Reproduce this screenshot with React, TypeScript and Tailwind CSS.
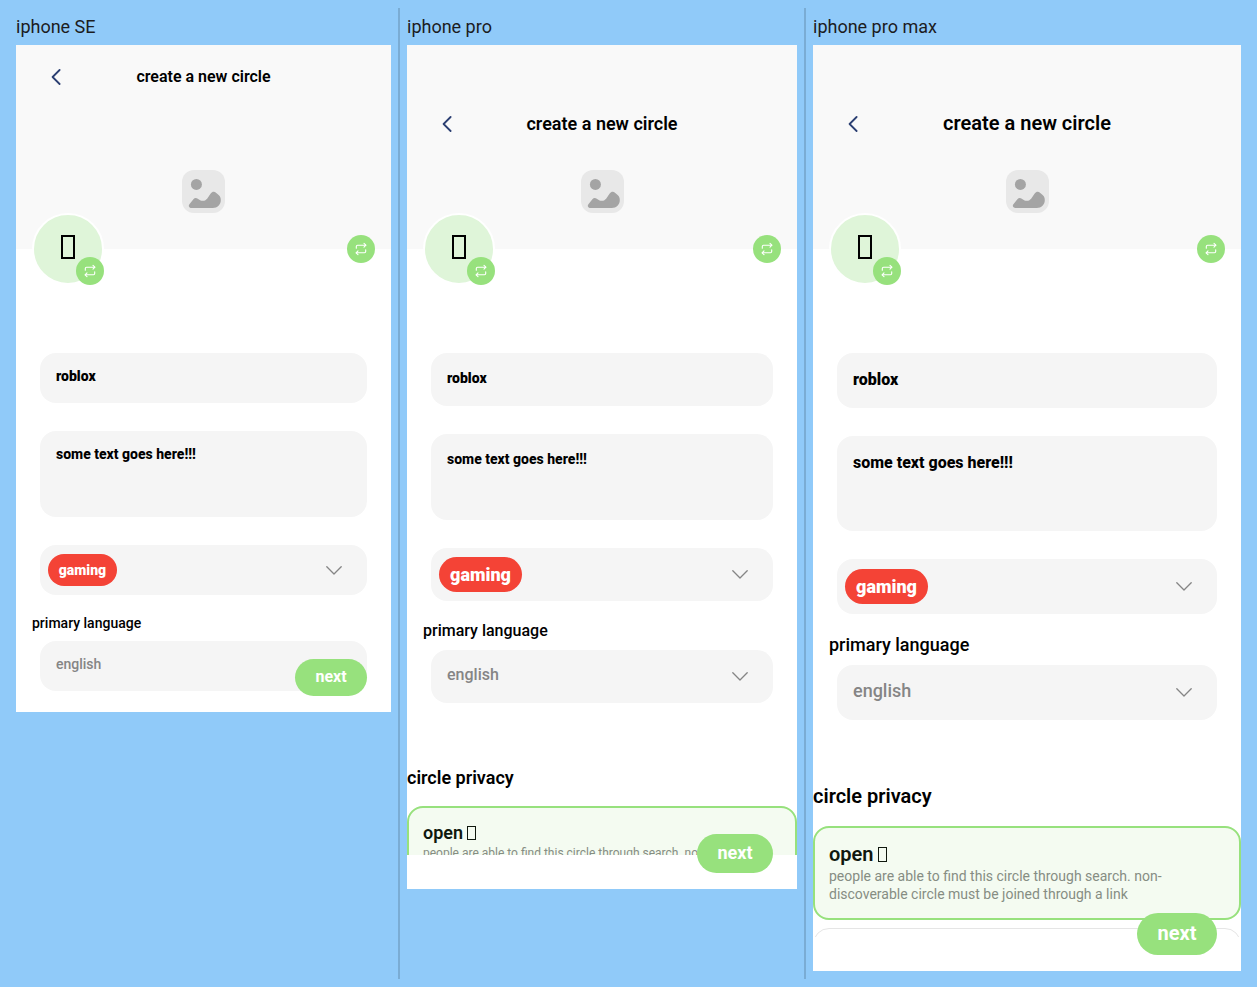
import React, { useId } from "react";

type Size = "se" | "pro" | "max";

interface DeviceStyle {
  label: string;
  screen: string;
  hero: string;
  title: string;
  input: string;
  area: string;
  field: string;
  pill: string;
  language: string;
  value: string;
  next: string;
}

interface PrivacyStyle {
  section: string;
  heading: string;
  option: string;
  glyph: string;
  detail: string;
}

const devices: Record<Size, DeviceStyle> = {
  se: {
    label: "iphone SE",
    screen: "aspect-[375/667]",
    hero: "",
    title: "text-base",
    input: "h-[50px] pb-1 text-sm",
    area: "h-[86px] py-[13px] text-sm",
    field: "h-[50px]",
    pill: "h-8 w-[69px] text-sm",
    language: "h-[46px] pt-[19px] text-sm",
    value: "text-sm",
    next: "h-[37px] w-[72px] pb-0.5 text-base",
  },
  pro: {
    label: "iphone pro",
    screen: "aspect-[390/844] pb-[34px]",
    hero: "pt-[47px]",
    title: "text-lg",
    input: "h-[53px] pb-1 text-sm",
    area: "h-[86px] py-[15px] text-sm",
    field: "h-[53px]",
    pill: "h-[35px] w-[83px] text-lg",
    language: "h-[49px] pt-5 text-base",
    value: "text-base",
    next: "h-[39px] w-[76px] pb-0.5 text-lg",
  },
  max: {
    label: "iphone pro max",
    screen: "aspect-[428/926] pb-[34px]",
    hero: "pt-[47px]",
    title: "pb-0.5 text-xl",
    input: "h-[55px] pb-0.5 text-base",
    area: "h-[95px] py-[15px] text-base",
    field: "h-[55px]",
    pill: "h-[35px] w-[83px] text-lg",
    language: "h-[51px] pt-5 text-lg",
    value: "text-lg",
    next: "h-[42px] w-20 pb-0.5 text-xl",
  },
};

const privacyStyles: Record<"pro" | "max", PrivacyStyle> = {
  pro: {
    section: "mt-[61px]",
    heading: "mb-3.5 text-lg",
    option: "text-lg leading-6",
    glyph: "h-3.5 w-[9px]",
    detail: "text-xs leading-4",
  },
  max: {
    section: "mt-[62px]",
    heading: "mb-4 text-xl",
    option: "text-xl leading-[26px]",
    glyph: "h-[15px] w-[9px]",
    detail: "text-sm leading-[18px]",
  },
};

function SwapIcon() {
  return (
    <svg width="12" height="14" viewBox="0 0 12 14" fill="none" stroke="white" strokeWidth="1.1" strokeLinecap="round" strokeLinejoin="round" aria-hidden="true">
      <path d="M9 1.3 10.9 3.2 9 5.1" />
      <path d="M1.3 6.2V4.4a1.2 1.2 0 0 1 1.2-1.2H10.7" />
      <path d="M3 8.9 1.1 10.8 3 12.7" />
      <path d="M10.7 7.8v1.8a1.2 1.2 0 0 1-1.2 1.2H1.3" />
    </svg>
  );
}

function SwapButton({ label, className = "" }: { label: string; className?: string }) {
  return (
    <button type="button" aria-label={label} className={`flex size-7 items-center justify-center rounded-full bg-[#97e17d] ${className}`}>
      <SwapIcon />
    </button>
  );
}

function PictureIcon() {
  return (
    <svg width="43" height="43" viewBox="0 0 43 43" className="mx-auto mt-auto mb-9 block" aria-hidden="true">
      <rect width="43" height="43" rx="12" fill="#e8e8e8" />
      <circle cx="14.4" cy="14.4" r="5.5" fill="#a4a4a4" />
      <path
        d="M7.4 34.2 11.4 29.2Q13.4 26.8 15.8 28.8C18.6 31.2 22.4 32 25.3 28.4L28.7 23.6C30.3 21.4 32.3 21.2 34.3 22.9L36.6 25C38.2 26.4 38.8 28 38.8 30 38.8 34.6 35.4 38 30.8 38H9.6C7.2 38 6 36 7.4 34.2Z"
        fill="#a4a4a4"
      />
    </svg>
  );
}

function ChevronIcon() {
  return (
    <svg width="16" height="9" viewBox="0 0 16 9" fill="none" stroke="#858585" strokeWidth="1.3" strokeLinecap="round" strokeLinejoin="round" className="pointer-events-none shrink-0" aria-hidden="true">
      <path d="M.8.8 8 8 15.2.8" />
    </svg>
  );
}

function PrivacySection({ size }: { size: "pro" | "max" }) {
  const p = privacyStyles[size];
  return (
    <section className={p.section}>
      <h3 className={`font-semibold ${p.heading}`}>circle privacy</h3>
      <div className="rounded-2xl border-2 border-[#97e17d] bg-[#f4fbf1] px-3.5 pt-[13px] pb-[15px]">
        <h4 className={`flex items-center gap-1 font-semibold text-[#10180e] ${p.option}`}>
          open
          <span aria-hidden="true" className={`border border-current ${p.glyph}`} />
        </h4>
        <p className={`pr-10 text-[#868d83] ${p.detail}`}>
          people are able to find this circle through search. non-discoverable circle must be joined through a link
        </p>
      </div>
      <div className="mt-2 h-24 rounded-2xl border border-[#e5e5e5]" />
    </section>
  );
}

function Phone({ size }: { size: Size }) {
  const d = devices[size];
  const languageId = useId();
  return (
    <section className="min-w-0 pb-2">
      <h2 className="flex h-[37px] items-center text-lg font-normal text-[#1c1c1e]">{d.label}</h2>
      <div className={`relative flex w-full flex-col overflow-hidden bg-white text-black ${d.screen}`}>
        <div className="min-h-0 flex-1 overflow-hidden">
          <div className={`flex h-[204px] flex-col bg-[#f9f9f9] ${d.hero}`}>
            <header className="grid h-16 shrink-0 grid-cols-[80px_1fr_80px] items-center">
              <button type="button" aria-label="Back" className="flex size-10 items-center justify-center justify-self-center">
                <svg width="10" height="16" viewBox="0 0 10 16" fill="none" stroke="#2b3f72" strokeWidth="1.8" strokeLinecap="round" strokeLinejoin="round" aria-hidden="true">
                  <path d="M8.6 1 1.6 8 8.6 15" />
                </svg>
              </button>
              <h1 className={`text-center font-semibold whitespace-nowrap ${d.title}`}>create a new circle</h1>
            </header>
            <PictureIcon />
          </div>

          <div className="-mt-9 flex items-center justify-between px-4">
            <div className="relative flex size-[72px] items-center justify-center rounded-full border-2 border-white bg-[#dff5d9]">
              <span aria-hidden="true" className="mb-1 h-6 w-3.5 border-2 border-black" />
              <SwapButton label="Change icon" className="absolute -right-0.5 -bottom-0.5" />
            </div>
            <SwapButton label="Change cover" />
          </div>

          <form className="mt-[68px] px-6" onSubmit={(e) => e.preventDefault()}>
            <input aria-label="Name" defaultValue="roblox" className={`block w-full rounded-2xl bg-[#f5f5f5] px-4 font-black outline-none ${d.input}`} />
            <textarea aria-label="Description" defaultValue="some text goes here!!!" className={`mt-7 block w-full resize-none rounded-2xl bg-[#f5f5f5] px-4 font-extrabold outline-none ${d.area}`} />
            <div className={`mt-7 flex items-center justify-between rounded-2xl bg-[#f5f5f5] pr-[25px] pl-2 ${d.field}`}>
              <select aria-label="Category" className={`appearance-none rounded-full bg-[#f44336] text-center font-black text-white outline-none ${d.pill}`}>
                <option>gaming</option>
              </select>
              <ChevronIcon />
            </div>
            <label htmlFor={languageId} className={`-ml-2 flex items-center pb-2.5 font-medium ${d.language}`}>
              primary language
            </label>
            <div className={`flex items-center rounded-2xl bg-[#f5f5f5] pr-[25px] pl-4 ${d.field}`}>
              <select id={languageId} className={`min-w-0 flex-1 appearance-none pb-1 font-medium text-[#858585] outline-none ${d.value}`}>
                <option>english</option>
              </select>
              <ChevronIcon />
            </div>
          </form>

          {size !== "se" && <PrivacySection size={size} />}
        </div>
        <button type="button" className={`absolute right-6 bottom-4 rounded-full bg-[#97e17d] text-center font-bold text-white ${d.next}`}>
          next
        </button>
      </div>
    </section>
  );
}

function Divider() {
  return <div className="w-0.5 justify-self-center bg-black/15" />;
}

export default function App() {
  return (
    <main className="grid min-h-screen grid-cols-[375fr_16px_390fr_16px_428fr] bg-[#90caf9] px-4 py-2 font-['Roboto',sans-serif]">
      <Phone size="se" />
      <Divider />
      <Phone size="pro" />
      <Divider />
      <Phone size="max" />
    </main>
  );
}
